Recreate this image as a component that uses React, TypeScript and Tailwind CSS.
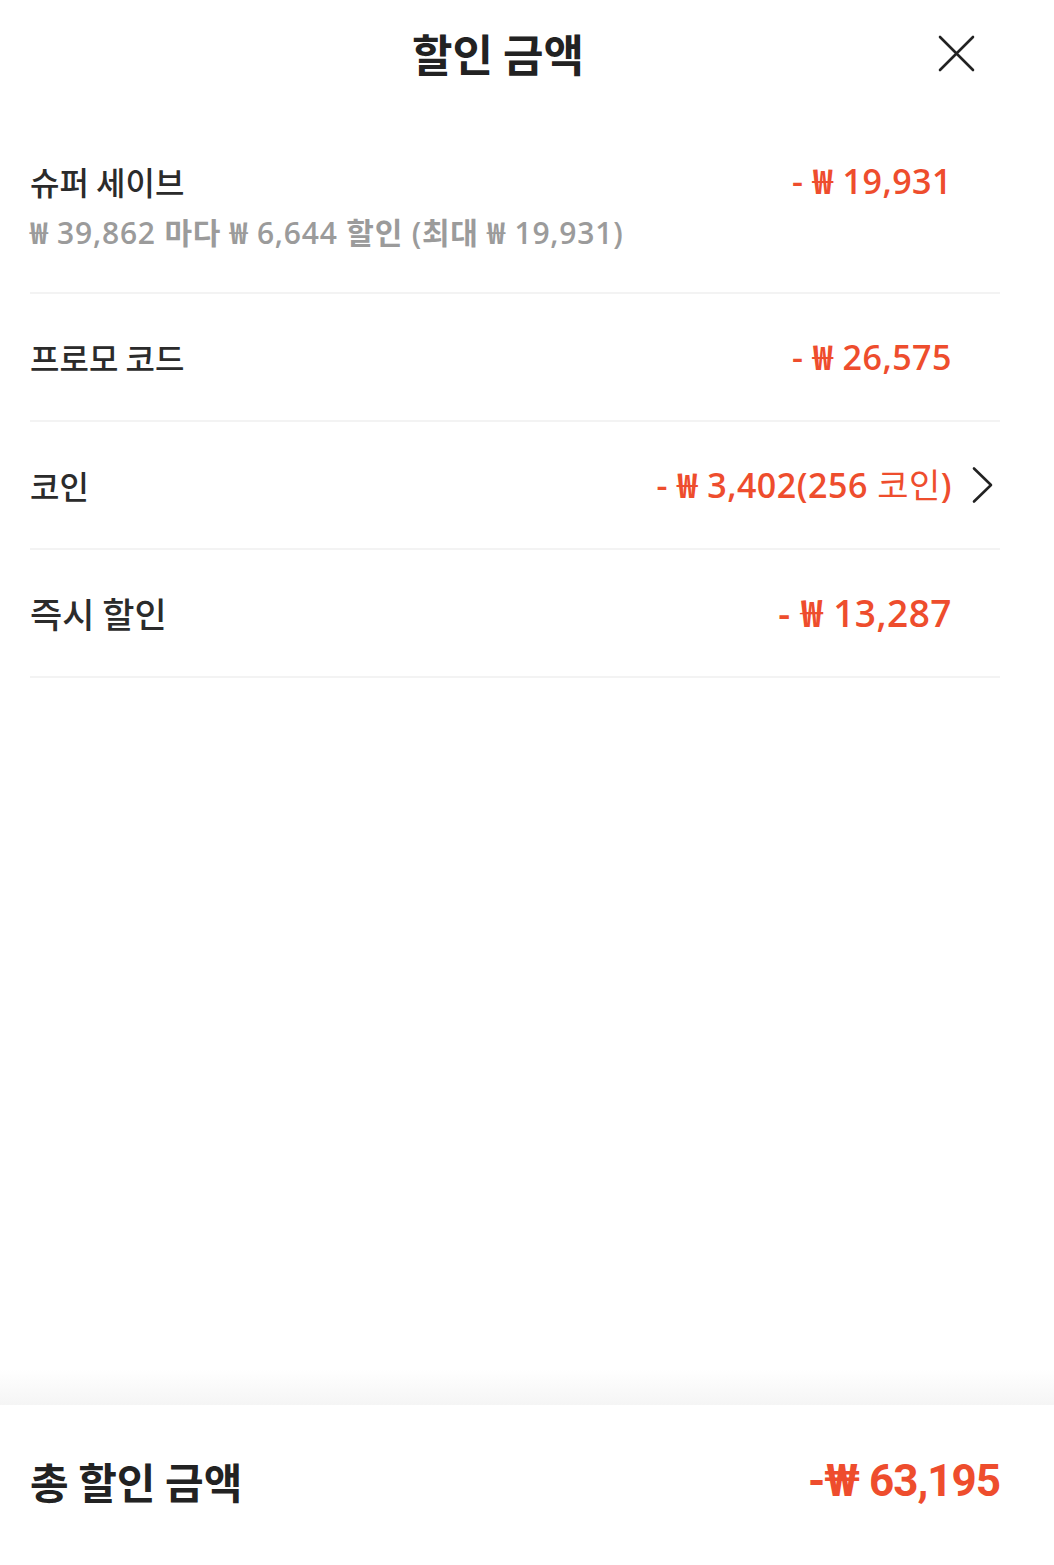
import { ReactNode } from 'react';

const KR = "font-['Noto_Sans_CJK_KR',sans-serif]";
const NUM = "font-['Open_Sans','Noto_Sans_CJK_KR',sans-serif]";

// one discount line; `extra` sits in the 50px slot at the right edge
function Row({ label, amount, extra, big }: { label: string; amount: ReactNode; extra?: ReactNode; big?: boolean }) {
  return (
    <div className="flex h-[128px] items-center border-b-2 border-[#f3f3f3]">
      <span className={`${KR} flex-1 font-medium leading-[48px] text-[#2b2b2b] ${big ? 'text-[35px]' : 'text-[32px]'}`}>{label}</span>
      <span className={`${NUM} font-semibold leading-[48px] tracking-[0.5px] text-[#ee4d2d] ${big ? 'text-[37px]' : 'text-[34px]'}`}>{amount}</span>
      <div className="flex w-[48px] justify-end">{extra}</div>
    </div>
  );
}

export default function App() {
  return (
    <div className="flex h-[1565px] flex-col bg-white">
      {/* Header */}
      <div className="relative flex h-[106px] items-center justify-center pr-[58px]">
        <h1 className={`${KR} text-[44px] font-bold leading-[56px] text-[#222]`}>할인 금액</h1>
        <svg className="absolute left-[936px] top-[33px]" width="41" height="41" viewBox="0 0 41 41" fill="none" stroke="#222" strokeWidth="2.6" strokeLinecap="round">
          <path d="M4 4 L37 37 M37 4 L4 37" />
        </svg>
      </div>

      {/* Discount rows */}
      <div className="flex-1 pl-[30px] pr-[54px]">
        <div className="flex border-b-2 border-[#f3f3f3] pb-[37px] pt-[51px]">
          <div className="flex-1">
            <div className={`${KR} text-[32px] font-medium leading-[48px] text-[#2b2b2b]`}>슈퍼 세이브</div>
            <div className={`${NUM} mt-[6px] text-[30px] font-semibold leading-[44px] tracking-[0.8px] text-[#9b9b9b]`}>
              ₩ 39,862 마다 ₩ 6,644 할인 (최대 ₩ 19,931)
            </div>
          </div>
          <span className={`${NUM} text-[34px] font-semibold leading-[48px] tracking-[0.5px] text-[#ee4d2d]`}>- ₩ 19,931</span>
          <div className="w-[48px]" />
        </div>

        <Row label="프로모 코드" amount="- ₩ 26,575" />
        <Row
          label="코인"
          amount={
            <>
              - ₩ 3,402(256 <span className="font-normal">코인</span>)
            </>
          }
          extra={
            <svg width="48" height="40" viewBox="0 0 48 40" fill="none" stroke="#222" strokeWidth="2.6" strokeLinecap="round" strokeLinejoin="round">
              <polyline points="22,3.5 39,20 22,36.5" />
            </svg>
          }
        />
        <Row label="즉시 할인" amount="- ₩ 13,287" big />
      </div>

      {/* Footer */}
      <div className="h-[36px] bg-linear-to-b from-white to-[#f5f5f5]" />
      <div className="flex h-[160px] items-center justify-between pb-[8px] pl-[30px] pr-[54px]">
        <span className={`${KR} text-[42px] font-bold leading-[56px] text-[#222]`}>총 할인 금액</span>
        <span className="font-['Roboto','Noto_Sans_CJK_KR',sans-serif] text-[44px] font-bold leading-[56px] tracking-[-1px] text-[#ee4d2d]">-₩ 63,195</span>
      </div>
    </div>
  );
}
